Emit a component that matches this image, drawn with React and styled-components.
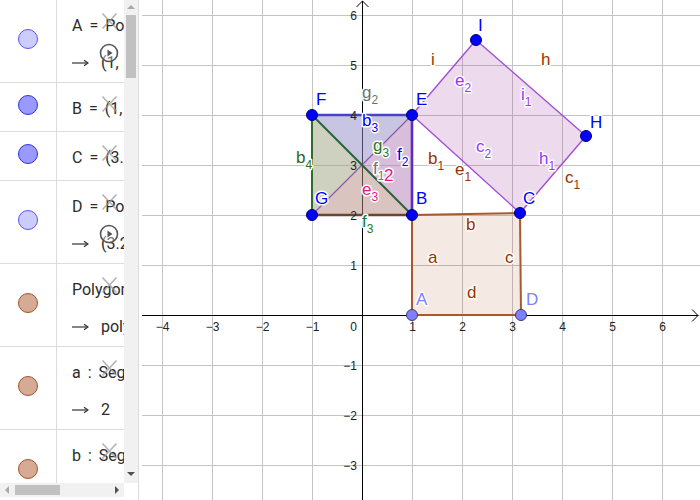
import React from "react";
import styled, { createGlobalStyle } from "styled-components";

const GlobalStyle = createGlobalStyle`
  html, body { margin: 0; padding: 0; background: #fff; }
  body { width: 700px; height: 500px; overflow: hidden; }
  #root { width: 700px; height: 500px; }
`;

const Applet = styled.div`
  display: flex;
  width: 700px;
  height: 500px;
  background: #fff;
  font-family: Roboto, "Noto Sans", sans-serif;
`;

const AlgebraView = styled.aside`
  flex: none;
  display: grid;
  grid-template-columns: 124px 14px;
  grid-template-rows: 483px 17px;
  width: 138px;
  height: 500px;
`;

const ItemList = styled.div`
  overflow: hidden;
  background: #fff;
`;

const Item = styled.div`
  position: relative;
  display: flex;
  height: ${(p) => (p.$tall ? 83 : 49)}px;
  box-sizing: border-box;
  border-bottom: 1px solid #dcdcdc;
`;

const MarbleCell = styled.div`
  flex: none;
  width: 57px;
  box-sizing: border-box;
  border-right: 1px solid #dcdcdc;
  display: flex;
  align-items: center;
  justify-content: center;
`;

const Marble = styled.span`
  width: 20px;
  height: 20px;
  box-sizing: border-box;
  border-radius: 50%;
  border: 1px solid ${(p) => p.$stroke};
  background: ${(p) => p.$fill};
  margin-bottom: 4px;
`;

const Content = styled.div`
  flex: 1;
  min-width: 0;
  overflow: hidden;
  padding: 14px 0 0 15px;
  display: flex;
  flex-direction: column;
  gap: 13px;
  white-space: nowrap;
  font-size: 16px;
  color: #2b2b2b;
`;

const Line = styled.div`
  height: 24px;
  line-height: 24px;
  display: flex;
  align-items: center;
  word-spacing: 3px;
`;

const ArrowGlyph = styled.svg`
  flex: none;
  width: 17px;
  height: 8px;
  margin-right: 12px;
`;

const DeleteIcon = styled.svg`
  position: absolute;
  top: 12px;
  right: 6px;
  width: 17px;
  height: 18px;
  opacity: 0.75;
`;

const PlayIcon = styled.svg`
  position: absolute;
  top: 43px;
  right: 5px;
  width: 20px;
  height: 20px;
`;

const VScroll = styled.div`
  background: #f1f1f1;
  display: flex;
  flex-direction: column;
  align-items: center;
`;

const HScroll = styled.div`
  background: #f1f1f1;
  display: flex;
  align-items: center;
  padding: 0 5px;
  margin-bottom: 3px;
`;

const Corner = styled.div`
  background: #fff;
`;

const Tri = styled.span`
  width: 0;
  height: 0;
  flex: none;
  border-style: solid;
  border-color: transparent;
  ${(p) =>
    p.$dir === "up"
      ? `border-width: 0 4px 4px 4px; border-bottom-color: ${p.$c};`
      : p.$dir === "down"
      ? `border-width: 4px 4px 0 4px; border-top-color: ${p.$c};`
      : p.$dir === "left"
      ? `border-width: 4px 4px 4px 0; border-right-color: ${p.$c};`
      : `border-width: 4px 0 4px 4px; border-left-color: ${p.$c};`}
`;

const VThumb = styled.span`
  width: 10px;
  height: 63px;
  margin-top: 6px;
  background: #c1c1c1;
`;

const HThumb = styled.span`
  width: 45px;
  height: 10px;
  margin-left: 6px;
  background: #c1c1c1;
`;

const Spacer = styled.span`
  flex: 1;
`;

const UpWrap = styled.span`
  margin-top: 5px;
  display: flex;
`;

const DownWrap = styled.span`
  margin-bottom: 7px;
  display: flex;
`;

const Splitter = styled.div`
  flex: none;
  width: 4px;
  height: 500px;
  box-sizing: border-box;
  border-left: 1px solid #dcdcdc;
  background: #fff;
`;

const GraphicsView = styled.main`
  flex: 1;
  height: 500px;
  overflow: hidden;
  background: #fff;
`;

const Canvas = styled.svg`
  display: block;
`;

const GridLine = styled.line`
  stroke: #c4c4c4;
  stroke-width: 1;
`;

const AxisLine = styled.path`
  stroke: #000;
  stroke-width: 1;
  fill: none;
`;

const AxisNum = styled.text`
  font-family: "Liberation Sans", Arial, sans-serif;
  font-size: 12px;
  fill: #222;
`;

const Fill = styled.polygon`
  stroke: none;
`;

const Edge = styled.line`
  stroke-linecap: round;
`;

const Outline = styled.polygon`
  fill: none;
  stroke-linejoin: round;
`;

const Dot = styled.circle`
  stroke-width: 1;
`;

const Label = styled.text`
  font-family: "Liberation Sans", Arial, sans-serif;
  font-size: 17px;
  paint-order: stroke;
  stroke: #fff;
  stroke-width: 3px;
  stroke-linejoin: round;
`;

const MARBLE = {
  light: { fill: "#ccccff", stroke: "#5555ee" },
  dark: { fill: "#9999ff", stroke: "#3333dd" },
  brown: { fill: "#d6ab95", stroke: "#a5522b" },
};

const ITEMS = [
  { tall: true, m: "light", l1: "A = Point(xAxis)", l2: "(1, 0)", play: true },
  { m: "dark", l1: "B = (1, 2)" },
  { m: "dark", l1: "C = (3.14, 2.04)" },
  { tall: true, m: "light", l1: "D = Point(xAxis)", l2: "(3.2, 0)", play: true },
  { tall: true, m: "brown", l1: "Polygon(A, B, C, D)", l2: "poly1 = 6.32" },
  { tall: true, m: "brown", l1: "a : Segment(A, B, poly1)", l2: "2" },
  { tall: true, m: "brown", l1: "b : Segment(B, C, poly1)", l2: "2.14" },
];

function Arrow() {
  return (
    <ArrowGlyph viewBox="0 0 17 8">
      <path d="M0 4H15.5" stroke="#333" strokeWidth="1.2" />
      <path d="M12 1.2L16 4L12 6.8" stroke="#333" strokeWidth="1.2" fill="none" />
    </ArrowGlyph>
  );
}

function AlgebraItem({ item }) {
  const c = MARBLE[item.m];
  return (
    <Item $tall={item.tall}>
      <MarbleCell>
        <Marble $fill={c.fill} $stroke={c.stroke} />
      </MarbleCell>
      <Content>
        <Line>{item.l1}</Line>
        {item.l2 && (
          <Line>
            <Arrow />
            {item.l2}
          </Line>
        )}
      </Content>
      <DeleteIcon viewBox="0 0 17 18">
        <path d="M1.5 1.5L15.5 16.5M15.5 1.5L1.5 16.5" stroke="#9a9a9a" strokeWidth="1.6" />
      </DeleteIcon>
      {item.play && (
        <PlayIcon viewBox="0 0 20 20">
          <circle cx="10" cy="10" r="8.5" fill="rgba(255,255,255,0.35)" stroke="#555" strokeWidth="1.6" />
          <path d="M8.5 6.5L13.5 10L8.5 13.5Z" fill="#555" />
        </PlayIcon>
      )}
    </Item>
  );
}

const X0 = 362;
const Y0 = 315;
const U = 50;

const P = {
  A: [412, 315],
  B: [412, 215],
  C: [520, 213],
  D: [521, 315],
  E: [412, 115],
  F: [312, 115],
  G: [312, 215],
  H: [586, 136],
  I: [476, 40],
  O: [362, 165],
};
const pts = (...names) => names.map((n) => P[n].join(",")).join(" ");

const BLUE = "#0000ff";
const LBLUE = "#7f7fff";
const BROWN = "#993300";
const PURPLE = "#9933ff";
const GREEN = "#1f7a1f";
const DGREEN = "#2d6a1e";
const GRAY = "#707070";
const PINK = "#e6148c";

const LABELS = [
  { t: "I", x: 478, y: 31, c: BLUE },
  { t: "i", x: 431, y: 65, c: BROWN },
  { t: "h", x: 541, y: 65, c: BROWN },
  { t: "e", s: "2", x: 455, y: 86, c: PURPLE },
  { t: "i", s: "1", x: 521, y: 100, c: PURPLE },
  { t: "E", x: 416, y: 105, c: BLUE },
  { t: "H", x: 590, y: 128, c: BLUE },
  { t: "c", s: "2", x: 476, y: 152, c: PURPLE },
  { t: "b", s: "1", x: 428, y: 164, c: BROWN },
  { t: "e", s: "1", x: 455, y: 175, c: BROWN },
  { t: "h", s: "1", x: 539, y: 164, c: PURPLE },
  { t: "c", s: "1", x: 565, y: 183, c: BROWN },
  { t: "C", x: 523, y: 204, c: BLUE },
  { t: "B", x: 416, y: 204, c: BLUE },
  { t: "b", x: 466, y: 230, c: BROWN },
  { t: "a", x: 428, y: 263, c: BROWN },
  { t: "c", x: 505, y: 263, c: BROWN },
  { t: "d", x: 467, y: 298, c: BROWN },
  { t: "A", x: 416, y: 305, c: LBLUE },
  { t: "D", x: 526, y: 305, c: LBLUE },
  { t: "F", x: 316, y: 105, c: BLUE },
  { t: "g", s: "2", x: 362, y: 98, c: GRAY },
  { t: "b", s: "3", x: 362, y: 126, c: BLUE },
  { t: "g", s: "3", x: 373, y: 151, c: GREEN },
  { t: "f", s: "2", x: 397, y: 160, c: BLUE },
  { t: "b", s: "4", x: 296, y: 163, c: DGREEN },
  { t: "f", s: "1", x: 373, y: 174, c: GRAY },
  { t: "e", s: "3", x: 362, y: 195, c: PINK },
  { t: "G", x: 315, y: 204, c: BLUE },
  { t: "f", s: "3", x: 362, y: 227, c: GREEN },
];

function GeoLabel({ l }) {
  return (
    <Label x={l.x} y={l.y} fill={l.c}>
      {l.t}
      {l.s && (
        <tspan dy="6" fontSize="12">
          {l.s}
        </tspan>
      )}
    </Label>
  );
}

function Graphics() {
  const xs = [-4, -3, -2, -1, 0, 1, 2, 3, 4, 5, 6];
  const ys = [-3, -2, -1, 0, 1, 2, 3, 4, 5, 6];
  return (
    <Canvas width="558" height="500" viewBox="142 0 558 500">
      {xs.map((k) => (
        <GridLine key={"gx" + k} x1={X0 + k * U + 0.5} x2={X0 + k * U + 0.5} y1="0" y2="500" />
      ))}
      {ys.map((j) => (
        <GridLine key={"gy" + j} x1="142" x2="700" y1={Y0 - j * U + 0.5} y2={Y0 - j * U + 0.5} />
      ))}

      <AxisLine d="M142 315.5H698M692 309.5L698 315.5L692 321.5" />
      <AxisLine d="M362.5 500V1M356.5 7L362.5 1L368.5 7" />

      <Fill points={pts("A", "B", "C", "D")} fill="#993300" fillOpacity="0.11" />
      <Fill points={pts("E", "I", "H", "C")} fill="#993399" fillOpacity="0.18" />
      <Fill points={pts("F", "E", "O")} fill="#8f8bc6" fillOpacity="0.5" />
      <Fill points={pts("F", "G", "O")} fill="#9ea281" fillOpacity="0.5" />
      <Fill points={pts("G", "B", "O")} fill="#b58a82" fillOpacity="0.5" />
      <Fill points={pts("E", "B", "O")} fill="#b47eb9" fillOpacity="0.5" />

      <Outline points={pts("A", "B", "C", "D")} stroke="#a8592f" strokeWidth="2" />
      <Outline points={pts("E", "I", "H", "C")} stroke="#a04fd6" strokeWidth="1.4" />

      <Edge x1={P.G[0]} y1={P.G[1]} x2={P.E[0]} y2={P.E[1]} stroke="#8c5aa8" strokeWidth="1.2" />
      <Edge x1={P.F[0]} y1={P.F[1]} x2={P.B[0]} y2={P.B[1]} stroke="#27643a" strokeWidth="2" />
      <Edge x1={P.F[0]} y1={P.F[1]} x2={P.G[0]} y2={P.G[1]} stroke="#2f6e2a" strokeWidth="2" />
      <Edge x1={P.G[0]} y1={P.G[1]} x2={P.B[0]} y2={P.B[1]} stroke="#6b4532" strokeWidth="2.6" />
      <Edge x1={P.F[0]} y1={P.F[1]} x2={P.E[0]} y2={P.E[1]} stroke="#4444c4" strokeWidth="2.6" />
      <Edge x1={P.E[0]} y1={P.E[1]} x2={P.B[0]} y2={P.B[1]} stroke="#5a2dc8" strokeWidth="2.6" />

      {xs
        .filter((k) => k !== 0)
        .map((k) => (
          <AxisNum key={"nx" + k} x={X0 + k * U + 0.5} y="331" textAnchor="middle">
            {k < 0 ? "\u2212" + -k : k}
          </AxisNum>
        ))}
      <AxisNum x="357" y="331" textAnchor="end">
        0
      </AxisNum>
      {ys
        .filter((j) => j !== 0)
        .map((j) => (
          <AxisNum key={"ny" + j} x="357" y={Y0 - j * U + 4.5} textAnchor="end">
            {j < 0 ? "\u2212" + -j : j}
          </AxisNum>
        ))}

      {["B", "C", "E", "F", "G", "H", "I"].map((n) => (
        <Dot key={n} cx={P[n][0]} cy={P[n][1]} r="5.5" fill="#0000ff" stroke="#00006b" />
      ))}
      {["A", "D"].map((n) => (
        <Dot key={n} cx={P[n][0]} cy={P[n][1]} r="5.5" fill="#7f7fff" stroke="#3c3c70" />
      ))}

      {LABELS.map((l, i) => (
        <GeoLabel key={i} l={l} />
      ))}
      <Label x="384" y="181" fill={PINK} fontSize="12">
        2
      </Label>
    </Canvas>
  );
}

export default function App() {
  return (
    <>
      <GlobalStyle />
      <Applet>
        <AlgebraView>
          <ItemList>
            {ITEMS.map((it, i) => (
              <AlgebraItem key={i} item={it} />
            ))}
          </ItemList>
          <VScroll>
            <UpWrap>
              <Tri $dir="up" $c="#a8a8a8" />
            </UpWrap>
            <VThumb />
            <Spacer />
            <DownWrap>
              <Tri $dir="down" $c="#505050" />
            </DownWrap>
          </VScroll>
          <HScroll>
            <Tri $dir="left" $c="#a8a8a8" />
            <HThumb />
            <Spacer />
            <Tri $dir="right" $c="#505050" />
          </HScroll>
          <Corner />
        </AlgebraView>
        <Splitter />
        <GraphicsView>
          <Graphics />
        </GraphicsView>
      </Applet>
    </>
  );
}
